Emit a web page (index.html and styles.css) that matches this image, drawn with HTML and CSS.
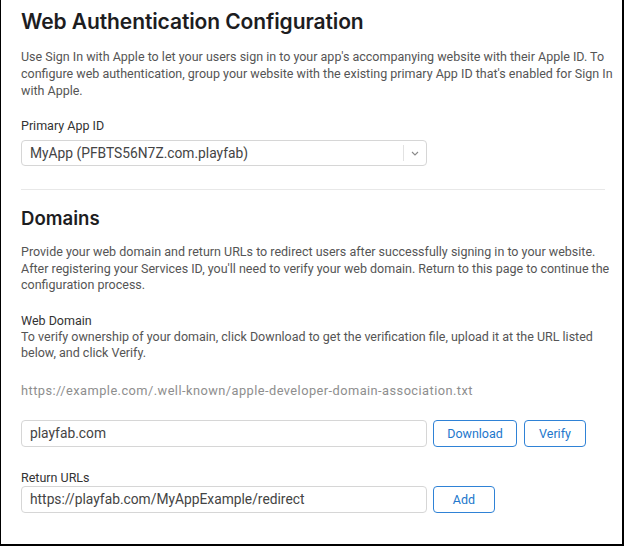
FILE: index.html
```html
<!DOCTYPE html>
<html>
<head>
<meta charset="utf-8">
<link rel="stylesheet" href="styles.css">
</head>
<body>
<div class="frame">
  <h1 class="title">Web Authentication Configuration</h1>
  <p class="desc desc-first">Use Sign In with Apple to let your users sign in to your app's accompanying website with their Apple ID. To<br>configure web authentication, group your website with the existing primary App ID that's enabled for Sign In<br>with Apple.</p>
  <div class="label label-app">Primary App ID</div>
  <div class="select">
    <span class="select-text">MyApp (PFBTS56N7Z.com.playfab)</span>
    <span class="select-sep"></span>
    <svg class="chev" width="8" height="5" viewBox="0 0 8 5"><path d="M1 1 L4 4 L7 1" fill="none" stroke="#8a8a8a" stroke-width="1.1"/></svg>
  </div>
  <hr class="rule">
  <h2 class="heading">Domains</h2>
  <p class="desc desc-domains">Provide your web domain and return URLs to redirect users after successfully signing in to your website.<br>After registering your Services ID, you'll need to verify your web domain. Return to this page to continue the<br>configuration process.</p>
  <div class="label label-web">Web Domain</div>
  <p class="desc desc-web">To verify ownership of your domain, click Download to get the verification file, upload it at the URL listed<br>below, and click Verify.</p>
  <div class="url">https://example.com/.well-known/apple-developer-domain-association.txt</div>
  <div class="row row-domain">
    <div class="input">playfab.com</div>
    <button class="btn btn-download">Download</button>
    <button class="btn btn-verify">Verify</button>
  </div>
  <div class="label label-return">Return URLs</div>
  <div class="row row-return">
    <div class="input">https://playfab.com/MyAppExample/redirect</div>
    <button class="btn btn-add">Add</button>
  </div>
</div>
</body>
</html>
```
FILE: styles.css
```css
* { box-sizing: border-box; }
html, body { margin: 0; padding: 0; background: #fff; }
body { font-family: Roboto, "Noto Sans", sans-serif; color: #333; }
.frame {
  width: 624px;
  height: 546px;
  border-left: 1px solid #000;
  border-right: 2px solid #000;
  border-bottom: 2px solid #000;
  padding: 10px 0 0 20px;
}
.title {
  margin: 0;
  font-family: Inter, Roboto, sans-serif;
  font-weight: 600;
  font-size: 21px;
  line-height: 24px;
  color: #1d1d1f;
  letter-spacing: -0.1px;
}
.desc {
  margin: 0;
  font-size: 12.5px;
  line-height: 17px;
  color: #555;
  white-space: nowrap;
}
.desc-first { margin-top: 14px; }
.label { font-size: 12.5px; line-height: 16px; color: #333; }
.label-app { margin-top: 19px; }
.select {
  margin-top: 6px;
  width: 406px;
  height: 26px;
  border: 1px solid #d6d6d6;
  border-radius: 4px;
  display: flex;
  align-items: center;
  padding-left: 8px;
}
.select-text { font-size: 13.8px; color: #444; flex: 1; }
.select-sep { width: 1px; height: 16px; background: #e2e2e2; margin-right: 7px; }
.chev { margin-right: 7px; }
.rule {
  margin: 23px 0 0 0;
  width: 584px;
  border: 0;
  border-top: 1px solid #e8e8e8;
  height: 0;
}
.heading {
  margin: 16px 0 0 0;
  font-family: Inter, Roboto, sans-serif;
  font-weight: 600;
  font-size: 18.6px;
  line-height: 24px;
  color: #1d1d1f;
}
.desc-domains { margin-top: 14px; line-height: 16.5px; }
.label-web { margin-top: 19px; }
.desc-web { line-height: 16.5px; }
.url {
  margin-top: 21px;
  font-size: 12.8px;
  line-height: 16px;
  color: #8e8e8e;
  letter-spacing: 0.45px;
}
.row { display: flex; align-items: center; gap: 6px; }
.row-domain { margin-top: 21px; }
.input {
  width: 406px;
  height: 27px;
  border: 1px solid #d6d6d6;
  border-radius: 4px;
  padding-left: 8px;
  font-size: 13.8px;
  line-height: 25px;
  color: #444;
}
.btn {
  height: 27px;
  background: #fff;
  border: 1px solid #2f82d6;
  border-radius: 4px;
  color: #2277cc;
  font-family: Roboto, sans-serif;
  font-size: 12.5px;
  padding: 0;
}
.btn-download { width: 84px; }
.btn-verify { width: 62px; margin-left: 1px; }
.btn-add { width: 62px; }
.label-return { margin-top: 23px; }
.row-return { margin-top: 0; }
```
